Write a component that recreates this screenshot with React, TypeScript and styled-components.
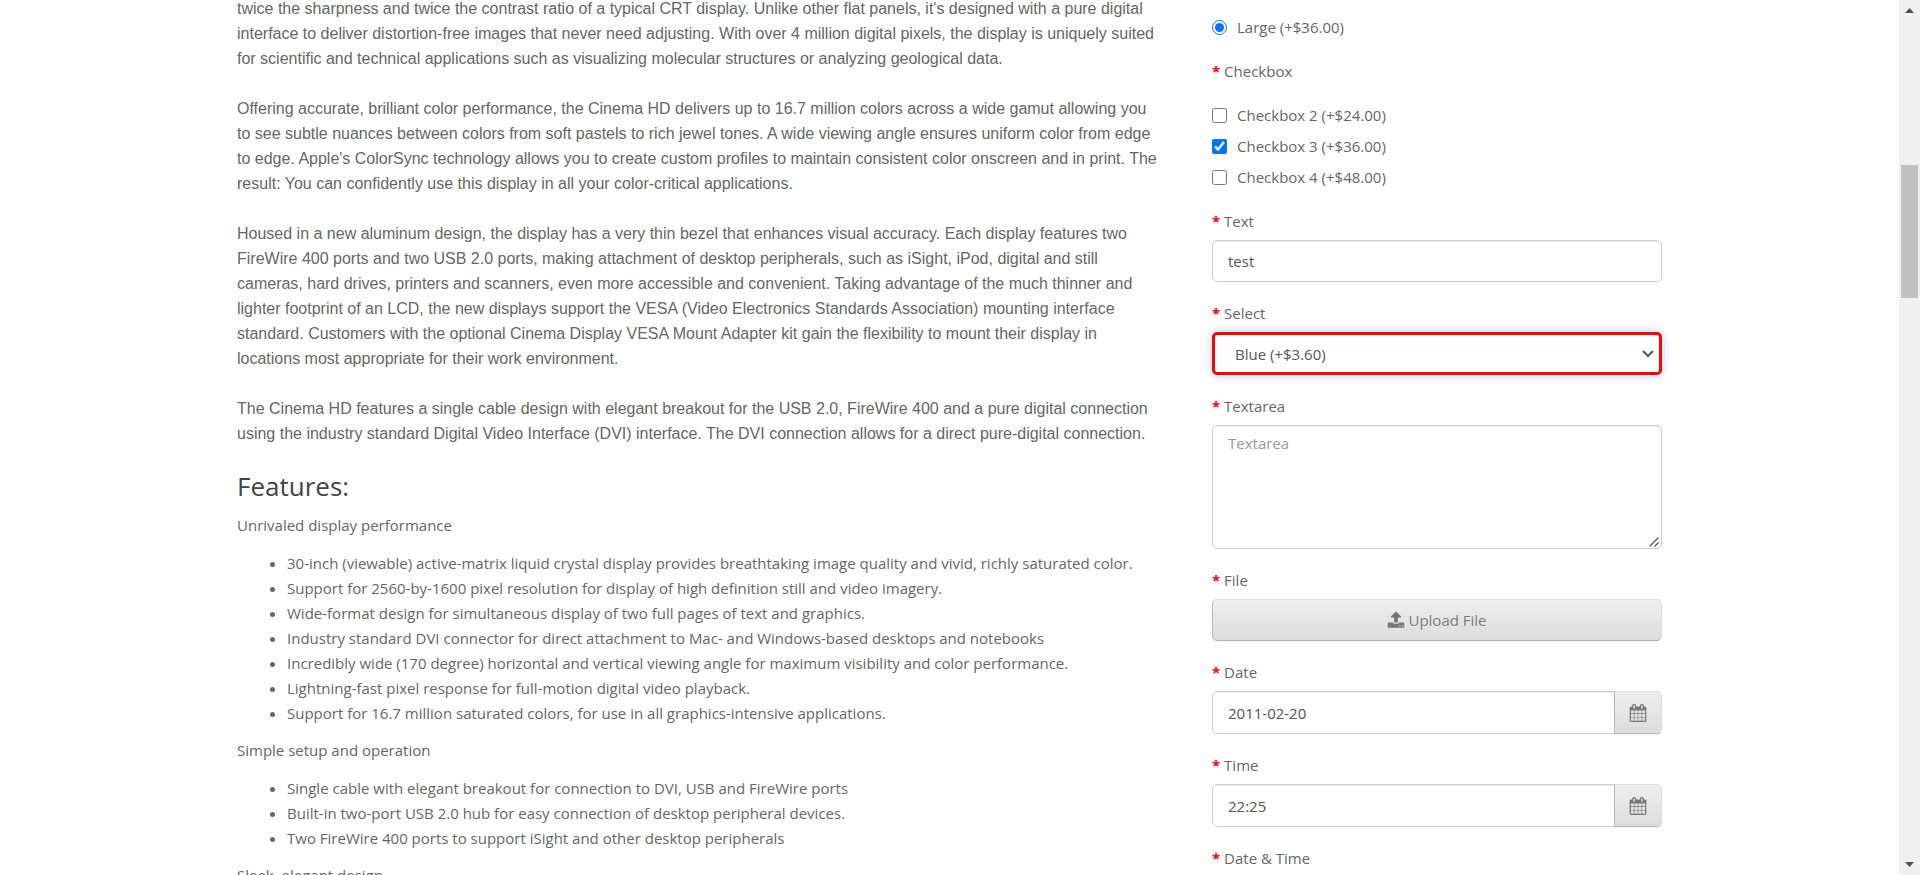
import React from 'react';
import styled, { createGlobalStyle, css } from 'styled-components';

const GlobalStyle = createGlobalStyle`
  *, *::before, *::after { box-sizing: border-box; }
  body {
    margin: 0;
    background: #fff;
    color: #666;
    font-family: 'Open Sans', sans-serif;
    font-size: 15px;
    line-height: 25px;
  }
`;

const Window = styled.div`
  display: flex;
  height: 100vh;
  overflow: hidden;
`;

const Viewport = styled.div`
  flex: 1;
  min-width: 0;
  overflow: hidden;
`;

const Container = styled.main`
  display: grid;
  grid-template-columns: minmax(0, 1fr) 450px;
  gap: 37px;
  max-width: 1463px;
  margin: 0 auto;
  padding: 0 19px;
`;

const Description = styled.article`
  margin-top: -4px;
`;

const Copy = styled.p`
  margin: 0 0 25px;
  padding-right: 14px;
  font-family: 'Liberation Sans', Helvetica, Arial, sans-serif;
  font-size: 16px;
`;

const Heading = styled.h3`
  margin: 0 0 12px;
  color: #444;
  font-size: 26px;
  font-weight: 400;
  line-height: 30px;
`;

const Lead = styled.p`
  margin: 0 0 13px;
`;

const FeatureList = styled.ul`
  margin: 0 0 12px;
  padding-left: 50px;
`;

const Options = styled.form`
  display: flex;
  flex-direction: column;
  gap: 19px;
  padding-top: 15px;
`;

const Group = styled.div`
  display: flex;
  flex-direction: column;
  gap: 6px;
`;

const ChoiceGroup = styled.fieldset`
  margin: 0;
  padding: 0;
  border: 0;
  min-width: 0;
`;

const Legend = styled.legend`
  padding: 0;
  margin-bottom: 19px;
`;

const Choices = styled.div`
  display: flex;
  flex-direction: column;
  gap: 6px;
`;

const Choice = styled.label`
  display: flex;
  align-items: center;
  gap: 10px;
`;

const Tick = styled.input`
  width: 15px;
  height: 15px;
  margin: 0;
`;

const Star = styled.span`
  color: #f00;
  font-weight: 700;
`;

const control = css`
  width: 100%;
  min-width: 0;
  border: 1px solid #ccc;
  border-radius: 5px;
  background: #fff;
  box-shadow: inset 0 1px 1px rgba(0, 0, 0, 0.075);
  color: #555;
  font: inherit;
  outline: 0;
`;

const TextInput = styled.input<{ $joined?: boolean }>`
  ${control}
  height: ${(p) => (p.$joined ? 43 : 42)}px;
  padding: 0 15px;
  ${(p) => p.$joined && 'border-radius: 5px 0 0 5px;'}
`;

const ControlWrap = styled.div`
  position: relative;
`;

const TextBox = styled.textarea`
  ${control}
  display: block;
  height: 124px;
  padding: 5px 15px;
  resize: vertical;
  &::placeholder { color: #999; }
  &::-webkit-resizer { display: none; }
`;

const Grip = styled.svg`
  position: absolute;
  right: 3px;
  bottom: 2px;
  pointer-events: none;
`;

const Select = styled.select`
  ${control}
  display: block;
  height: 43px;
  padding: 2px 20px 0;
  border: 3px solid #f00;
  box-shadow: inset 0 1px 1px rgba(0, 0, 0, 0.075), 0 0 10px rgba(102, 175, 233, 0.6);
  appearance: none;
`;

const Chevron = styled.svg`
  position: absolute;
  top: 18px;
  right: 8px;
  pointer-events: none;
`;

const Button = styled.button<{ $addon?: boolean }>`
  display: flex;
  align-items: center;
  justify-content: center;
  gap: 3px;
  height: 42px;
  padding: 0;
  border: 1px solid;
  border-color: #ddd #ddd #b3b3b3 #b7b7b7;
  border-radius: 5px;
  background: linear-gradient(#eee, #ddd);
  box-shadow: 0 1px 2px rgba(0, 0, 0, 0.05);
  color: #777;
  font: inherit;
  text-shadow: 0 1px 0 rgba(255, 255, 255, 0.5);
  ${(p) =>
    p.$addon &&
    css`
      flex: 0 0 48px;
      height: 43px;
      margin-left: -1px;
      border-radius: 0 5px 5px 0;
    `}
`;

const InputGroup = styled.div`
  display: flex;
`;

const Scrollbar = styled.div`
  display: grid;
  grid-template-rows: 21px 144fr 133fr 556fr 21px;
  flex: 0 0 21px;
  background: #f0f0f0;
`;

const Thumb = styled.div`
  grid-row: 3;
  margin: 0 2px;
  background: #c1c1c1;
`;

const Arrow = styled.svg<{ $end?: boolean }>`
  grid-row: ${(p) => (p.$end ? 5 : 1)};
  align-self: center;
  justify-self: center;
`;

const UploadIcon = () => (
  <svg width="18" height="18" viewBox="0 0 1792 1792" fill="currentColor" aria-hidden="true">
    <path d="M1344 1472q0-26-19-45t-45-19-45 19-19 45 19 45 45 19 45-19 19-45zm256 0q0-26-19-45t-45-19-45 19-19 45 19 45 45 19 45-19 19-45zm128-224v320q0 40-28 68t-68 28h-1472q-40 0-68-28t-28-68v-320q0-40 28-68t68-28h427q21 56 70.5 92t110.5 36h256q61 0 110.5-36t70.5-92h427q40 0 68 28t28 68zm-325-648q-17 40-59 40h-256v448q0 26-19 45t-45 19h-256q-26 0-45-19t-19-45v-448h-256q-42 0-59-40-17-39 14-69l448-448q18-19 45-19t45 19l448 448q31 30 14 69z" />
  </svg>
);

const CalendarIcon = () => (
  <svg width="18" height="18" viewBox="0 0 1792 1792" fill="currentColor" aria-hidden="true">
    <path d="M192 1664h288v-288h-288v288zm352 0h320v-288h-320v288zm-352-352h288v-320h-288v320zm352 0h320v-320h-320v320zm-352-384h288v-288h-288v288zm736 736h320v-288h-320v288zm-384-736h320v-288h-320v288zm768 736h288v-288h-288v288zm-384-352h320v-320h-320v320zm-352-864v-288q0-13-9.5-22.5t-22.5-9.5h-64q-13 0-22.5 9.5t-9.5 22.5v288q0 13 9.5 22.5t22.5 9.5h64q13 0 22.5-9.5t9.5-22.5zm736 864h288v-320h-288v320zm-384-384h320v-288h-320v288zm384 0h288v-288h-288v288zm32-480v-288q0-13-9.5-22.5t-22.5-9.5h-64q-13 0-22.5 9.5t-9.5 22.5v288q0 13 9.5 22.5t22.5 9.5h64q13 0 22.5-9.5t9.5-22.5zm384-64v1280q0 52-38 90t-90 38h-1408q-52 0-90-38t-38-90v-1280q0-52 38-90t90-38h128v-96q0-66 47-113t113-47h64q66 0 113 47t47 113v96h384v-96q0-66 47-113t113-47h64q66 0 113 47t47 113v96h128q52 0 90 38t38 90z" />
  </svg>
);

const Required = ({ children }: { children: React.ReactNode }) => (
  <>
    <Star>* </Star>
    {children}
  </>
);

const PickerField = ({ id, label, value }: { id: string; label: string; value: string }) => (
  <Group>
    <label htmlFor={id}><Required>{label}</Required></label>
    <InputGroup>
      <TextInput id={id} type="text" defaultValue={value} $joined />
      <Button type="button" aria-label={`Choose ${label}`} $addon>
        <CalendarIcon />
      </Button>
    </InputGroup>
  </Group>
);

const paragraphs = [
  "twice the sharpness and twice the contrast ratio of a typical CRT display. Unlike other flat panels, it's designed with a pure digital interface to deliver distortion-free images that never need adjusting. With over 4 million digital pixels, the display is uniquely suited for scientific and technical applications such as visualizing molecular structures or analyzing geological data.",
  "Offering accurate, brilliant color performance, the Cinema HD delivers up to 16.7 million colors across a wide gamut allowing you to see subtle nuances between colors from soft pastels to rich jewel tones. A wide viewing angle ensures uniform color from edge to edge. Apple's ColorSync technology allows you to create custom profiles to maintain consistent color onscreen and in print. The result: You can confidently use this display in all your color-critical applications.",
  'Housed in a new aluminum design, the display has a very thin bezel that enhances visual accuracy. Each display features two FireWire 400 ports and two USB 2.0 ports, making attachment of desktop peripherals, such as iSight, iPod, digital and still cameras, hard drives, printers and scanners, even more accessible and convenient. Taking advantage of the much thinner and lighter footprint of an LCD, the new displays support the VESA (Video Electronics Standards Association) mounting interface standard. Customers with the optional Cinema Display VESA Mount Adapter kit gain the flexibility to mount their display in locations most appropriate for their work environment.',
  'The Cinema HD features a single cable design with elegant breakout for the USB 2.0, FireWire 400 and a pure digital connection using the industry standard Digital Video Interface (DVI) interface. The DVI connection allows for a direct pure-digital connection.',
];

const features = [
  {
    title: 'Unrivaled display performance',
    items: [
      '30-inch (viewable) active-matrix liquid crystal display provides breathtaking image quality and vivid, richly saturated color.',
      'Support for 2560-by-1600 pixel resolution for display of high definition still and video imagery.',
      'Wide-format design for simultaneous display of two full pages of text and graphics.',
      'Industry standard DVI connector for direct attachment to Mac- and Windows-based desktops and notebooks',
      'Incredibly wide (170 degree) horizontal and vertical viewing angle for maximum visibility and color performance.',
      'Lightning-fast pixel response for full-motion digital video playback.',
      'Support for 16.7 million saturated colors, for use in all graphics-intensive applications.',
    ],
  },
  {
    title: 'Simple setup and operation',
    items: [
      'Single cable with elegant breakout for connection to DVI, USB and FireWire ports',
      'Built-in two-port USB 2.0 hub for easy connection of desktop peripheral devices.',
      'Two FireWire 400 ports to support iSight and other desktop peripherals',
    ],
  },
  { title: 'Sleek, elegant design', items: [] },
];

const checkboxes = [
  { label: 'Checkbox 2 (+$24.00)', checked: false },
  { label: 'Checkbox 3 (+$36.00)', checked: true },
  { label: 'Checkbox 4 (+$48.00)', checked: false },
];

export default function App() {
  return (
    <>
      <GlobalStyle />
      <Window>
        <Viewport>
          <Container>
            <Description>
              {paragraphs.map((text) => <Copy key={text}>{text}</Copy>)}
              <Heading>Features:</Heading>
              {features.map(({ title, items }) => (
                <React.Fragment key={title}>
                  <Lead>{title}</Lead>
                  {items.length > 0 && (
                    <FeatureList>
                      {items.map((item) => <li key={item}>{item}</li>)}
                    </FeatureList>
                  )}
                </React.Fragment>
              ))}
            </Description>

            <Options>
              <Choice>
                <Tick type="radio" name="size" defaultChecked />
                Large (+$36.00)
              </Choice>

              <ChoiceGroup>
                <Legend><Required>Checkbox</Required></Legend>
                <Choices>
                  {checkboxes.map(({ label, checked }) => (
                    <Choice key={label}>
                      <Tick type="checkbox" defaultChecked={checked} />
                      {label}
                    </Choice>
                  ))}
                </Choices>
              </ChoiceGroup>

              <Group>
                <label htmlFor="text"><Required>Text</Required></label>
                <TextInput id="text" type="text" defaultValue="test" />
              </Group>

              <Group>
                <label htmlFor="select"><Required>Select</Required></label>
                <ControlWrap>
                  <Select id="select" defaultValue="blue">
                    <option value="blue">Blue (+$3.60)</option>
                  </Select>
                  <Chevron width="12" height="8" viewBox="0 0 12 8" fill="none" stroke="#555" strokeWidth="2" aria-hidden="true">
                    <path d="M1 1l5 5 5-5" />
                  </Chevron>
                </ControlWrap>
              </Group>

              <Group>
                <label htmlFor="textarea"><Required>Textarea</Required></label>
                <ControlWrap>
                  <TextBox id="textarea" placeholder="Textarea" />
                  <Grip width="10" height="10" viewBox="0 0 10 10" fill="none" stroke="#555" strokeWidth="1.300" aria-hidden="true">
                    <path d="M0.500 9.500l9-9M5.500 9.500l4-4" />
                  </Grip>
                </ControlWrap>
              </Group>

              <Group>
                <label htmlFor="file"><Required>File</Required></label>
                <Button id="file" type="button">
                  <UploadIcon />
                  Upload File
                </Button>
              </Group>

              <PickerField id="date" label="Date" value="2011-02-20" />
              <PickerField id="time" label="Time" value="22:25" />
              <PickerField id="datetime" label="Date &amp; Time" value="2011-02-20 22:25" />
            </Options>
          </Container>
        </Viewport>

        <Scrollbar aria-hidden="true">
          <Arrow width="9" height="5" viewBox="0 0 9 5" fill="#505050"><path d="M0 5l4.500-5 4.500 5z" /></Arrow>
          <Thumb />
          <Arrow width="9" height="5" viewBox="0 0 9 5" fill="#505050" $end><path d="M0 0l4.500 5 4.500-5z" /></Arrow>
        </Scrollbar>
      </Window>
    </>
  );
}
